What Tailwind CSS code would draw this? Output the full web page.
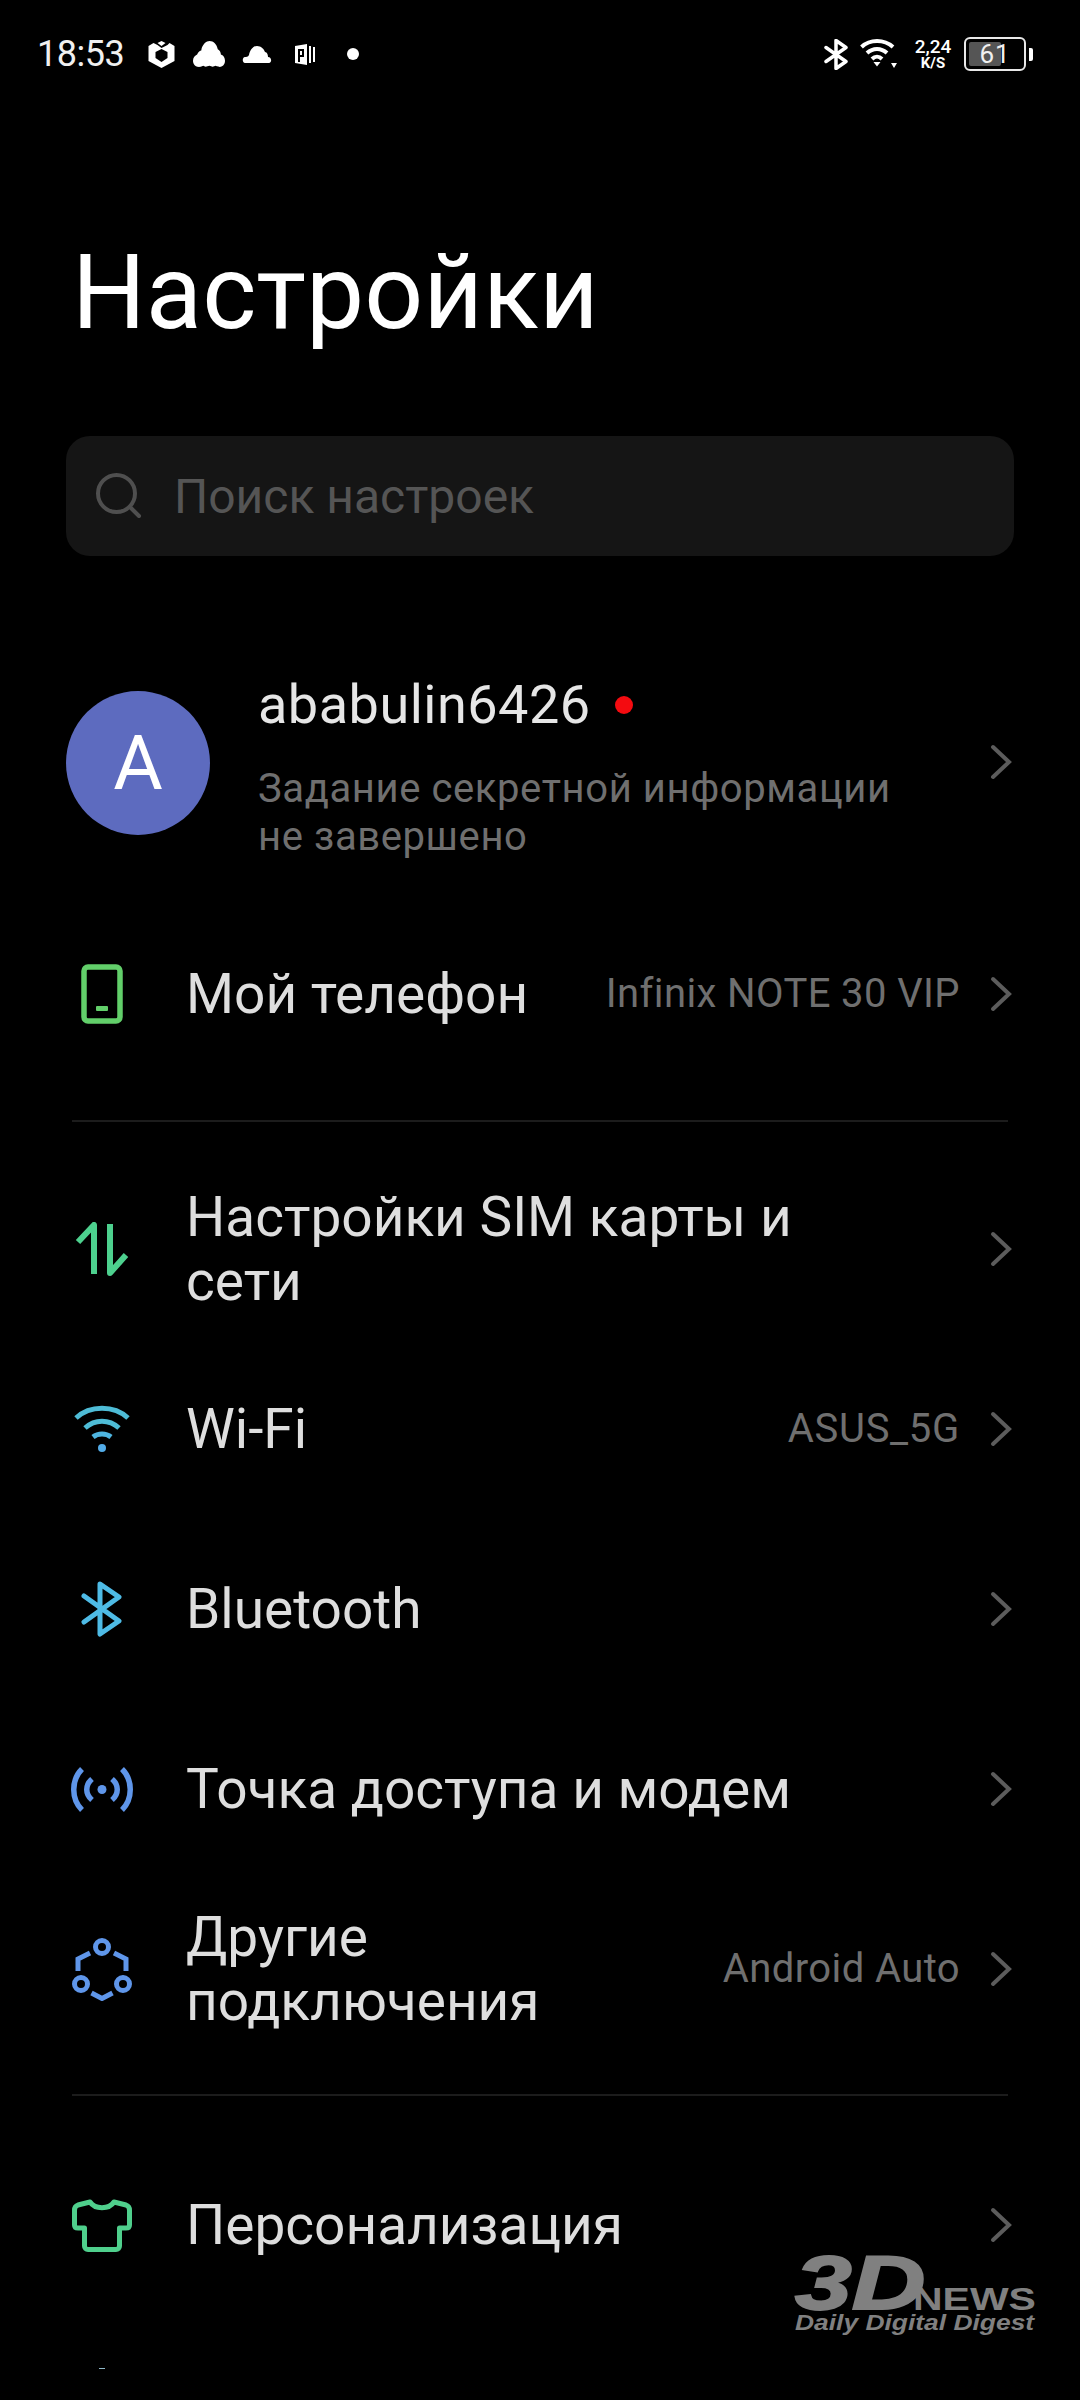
<!DOCTYPE html>
<html><head><meta charset="utf-8"><script src="https://cdn.jsdelivr.net/npm/@tailwindcss/browser@4"></script></head>
<body class="bg-black">
<div class="relative w-[1080px] h-[2400px] overflow-hidden bg-black font-['Roboto',sans-serif]">
  <!-- status bar -->
  <div class="h-[108px] flex items-center pl-[37px] pr-[47px] text-white">
    <span class="text-[36px] leading-none w-[111px] text-[#f0f0f0] tracking-[-0.5px]">18:53</span>
    <div class="flex items-center">
      <svg width="27" height="27" viewBox="0 0 26 27"><path d="M13 0 L17 2 L13 5 L9 2Z M5 2 L9 4 L13 7 L19 4 L21 2 L26 5 V20 L13 27 L0 20 V5Z M13 8 L7 11 V17 L13 21 L19 17 V11Z" fill="#fff" fill-rule="evenodd"/></svg>
      <svg class="ml-[18px]" width="32" height="26" viewBox="0 0 31 25"><path d="M6 25 C1 25 0 21 0 19 C0 16 2 14 4 13 C5 10 7 9 8 9 C9 3 13 0 16 0 C20 0 23 3 24 8 C26 9 27 11 27 13 C30 14 31 17 31 19 C31 23 28 25 26 25 C24 25 22 24 22 24 C20 25 18 25 16 24 C13 25 11 25 10 24 C8 25 7 25 6 25Z" fill="#fff"/></svg>
      <svg class="ml-[17px]" width="30" height="17" viewBox="0 0 30 17"><path d="M3 17 C0 17 0 11 3 11 C4 11 6 11 7 9 C8 4 11 0 15 0 C19 0 22 3 23 6 C25 6 26 9 26 11 C30 11 30 17 27 17Z" fill="#fff"/></svg>
      <svg class="ml-[23px]" width="20" height="21" viewBox="0 0 20 21"><path d="M0 2 L12 0 V21 L0 19Z" fill="#fff"/><path d="M3 5 H9 V13 H5 V18 H3Z M5 7 V11 H7 V7Z" fill="#000" fill-rule="evenodd"/><rect x="14" y="2" width="2" height="17" fill="#fff"/><rect x="18" y="3" width="2" height="15" fill="#fff"/></svg>
      <div class="ml-[32px] w-[12px] h-[12px] rounded-full bg-white"></div>
    </div>
    <div class="ml-auto flex items-center">
      <svg width="24" height="31" viewBox="0 0 24 31"><path d="M2 8.500 L22 22.500 L12 29.500 V1.500 L22 8.500 L2 22.500" fill="none" stroke="#fff" stroke-width="3.500" stroke-linejoin="round" stroke-linecap="round"/></svg>
      <svg class="ml-[12px]" width="37" height="30" viewBox="0 0 37 30"><path d="M1.500 8 C10 0 24 0 33 8" fill="none" stroke="#fff" stroke-width="4"/><path d="M7 14 C13 8.500 21 8.500 27 14" fill="none" stroke="#fff" stroke-width="4"/><path d="M12 20 C15 17 19 17 22 20" fill="none" stroke="#fff" stroke-width="4"/><path d="M13.500 23 H20.500 L17 27.500Z" fill="#fff"/><path d="M31 24 H37 L34 29Z" fill="#fff"/></svg>
      <div class="ml-[16px] w-[40px] flex flex-col items-center text-white">
        <span class="text-[19px] leading-[19px] font-medium">2,24</span>
        <span class="text-[15px] leading-[15px] font-bold">K/S</span>
      </div>
      <div class="relative ml-[11px] w-[62px] h-[34px] rounded-[6px] border-[2px] border-[#e8e8e8] p-[3px]">
        <div class="w-[32px] h-full bg-[#555] rounded-[2px]"></div>
        <span class="absolute inset-0 flex items-center justify-center text-[26px] leading-none text-[#f0f0f0] tracking-[1px]">61</span>
      </div>
      <div class="ml-[3px] w-[4px] h-[13px] bg-white rounded-r-[2px]"></div>
    </div>
  </div>

  <!-- title -->
  <h1 class="mt-[149px] pl-[72px] text-[103.5px] leading-[72px] h-[72px] font-normal text-white">Настройки</h1>

  <!-- search -->
  <div class="mt-[107px] mx-[66px] h-[120px] w-[948px] rounded-[24px] bg-[#151515] flex items-center pl-[30px]">
    <svg width="46" height="46" viewBox="0 0 46 46"><circle cx="20.500" cy="20.500" r="18.500" fill="none" stroke="#4f4f4f" stroke-width="4"/><path d="M34 34 L43 43" stroke="#4f4f4f" stroke-width="4" stroke-linecap="round"/></svg>
    <span class="ml-[32px] mt-[2px] text-[48px] leading-none text-[#555555]">Поиск настроек</span>
  </div>

  <!-- profile -->
  <div class="mt-[117px] h-[172px] pl-[66px] pr-[68px] flex items-center">
    <div class="w-[144px] h-[144px] rounded-full bg-[#5d6bbf] flex items-center justify-center text-white text-[76px] leading-none shrink-0 mt-[8px]">A</div>
    <div class="ml-[48px] mt-[16px] flex-1 min-w-0">
      <div class="flex items-center">
        <span class="text-[54px] leading-[62px] text-[#e6e6e6] tracking-[0.5px]">ababulin6426</span>
        <span class="ml-[24px] w-[18px] h-[18px] rounded-full bg-[#f40b10]"></span>
      </div>
      <div class="mt-[29px] text-[40px] leading-[48px] text-[#6f6f6f] tracking-[0.6px]">Задание секретной информации<br>не завершено</div>
    </div>
    <svg class="mt-[6px]" width="22" height="36" viewBox="0 0 22 36"><path d="M3 3 L19 18 L3 33" fill="none" stroke="#5c5c5c" stroke-width="4" stroke-linecap="round"/></svg>
  </div>

  <!-- my phone -->
  <div class="mt-[59px] h-[180px] flex items-center pl-[72px] pr-[68px]">
    <div class="w-[60px] flex justify-center"><svg width="42" height="60" viewBox="0 0 42 60"><rect x="3" y="3" width="36" height="54" rx="4" fill="none" stroke="#62cf6a" stroke-width="5.500"/><rect x="15" y="42" width="12" height="5" rx="1" fill="#62cf6a"/></svg></div>
    <span class="ml-[54px] text-[55px] leading-[64px] text-[#dedede] flex-1">Мой телефон</span>
    <span class="text-[40px] text-[#6f6f6f] mr-[30px] tracking-[0.4px]">Infinix NOTE 30 VIP</span>
    <svg width="22" height="36" viewBox="0 0 22 36"><path d="M3 3 L19 18 L3 33" fill="none" stroke="#5c5c5c" stroke-width="4" stroke-linecap="round"/></svg>
  </div>
  <div class="mx-[72px] mt-[36px] h-[2px] bg-[#1c1c1c]"></div>

  <!-- SIM -->
  <div class="mt-[37px] h-[180px] flex items-center pl-[72px] pr-[68px]">
    <div class="w-[60px] flex justify-center"><svg width="54" height="54" viewBox="0 0 54 54"><path d="M3 20 L19 3 V52 M35 2 V51 L51 33" fill="none" stroke="#4dd08e" stroke-width="6" stroke-linejoin="round"/></svg></div>
    <span class="ml-[54px] text-[55px] leading-[64px] text-[#dedede] flex-1">Настройки SIM карты и<br>сети</span>
    <svg width="22" height="36" viewBox="0 0 22 36"><path d="M3 3 L19 18 L3 33" fill="none" stroke="#5c5c5c" stroke-width="4" stroke-linecap="round"/></svg>
  </div>
  <!-- WiFi -->
  <div class="h-[180px] flex items-center pl-[72px] pr-[68px]">
    <div class="w-[60px] flex justify-center"><svg width="58" height="50" viewBox="0 0 58 50"><path d="M3 14 C17 1 41 1 55 14" fill="none" stroke="#4ebcd6" stroke-width="5"/><path d="M12 24 C22 15 36 15 46 24" fill="none" stroke="#4ebcd6" stroke-width="5"/><path d="M20 33 C25 29 33 29 38 33" fill="none" stroke="#4eb5e0" stroke-width="5"/><circle cx="29" cy="44" r="4" fill="#52ace8"/></svg></div>
    <span class="ml-[54px] text-[55px] leading-[64px] text-[#dedede] flex-1">Wi-Fi</span>
    <span class="text-[40px] text-[#6f6f6f] mr-[30px] tracking-[0.7px]">ASUS_5G</span>
    <svg width="22" height="36" viewBox="0 0 22 36"><path d="M3 3 L19 18 L3 33" fill="none" stroke="#5c5c5c" stroke-width="4" stroke-linecap="round"/></svg>
  </div>
  <!-- BT -->
  <div class="h-[180px] flex items-center pl-[72px] pr-[68px]">
    <div class="w-[60px] flex justify-center"><svg width="44" height="56" viewBox="0 0 44 56"><path d="M4 15 L39 40 L20 53 V3 L39 16 L4 41" fill="none" stroke="#4ebbe6" stroke-width="5" stroke-linejoin="round" stroke-linecap="round"/></svg></div>
    <span class="ml-[54px] text-[55px] leading-[64px] text-[#dedede] flex-1">Bluetooth</span>
    <svg width="22" height="36" viewBox="0 0 22 36"><path d="M3 3 L19 18 L3 33" fill="none" stroke="#5c5c5c" stroke-width="4" stroke-linecap="round"/></svg>
  </div>
  <!-- Hotspot -->
  <div class="h-[180px] flex items-center pl-[72px] pr-[68px]">
    <div class="w-[60px] flex justify-center"><svg width="64" height="47" viewBox="0 0 64 47" class="shrink-0"><g fill="none" stroke="#5f96ea" stroke-width="5.500"><path d="M12 3 C1 14 1 33 12 44"/><path d="M52 3 C63 14 63 33 52 44"/><path d="M22 13 C15 19 15 28 22 34"/><path d="M42 13 C49 19 49 28 42 34"/></g><circle cx="32" cy="23.500" r="4.500" fill="#5f96ea"/></svg></div>
    <span class="ml-[54px] text-[55px] leading-[64px] text-[#dedede] flex-1">Точка доступа и модем</span>
    <svg width="22" height="36" viewBox="0 0 22 36"><path d="M3 3 L19 18 L3 33" fill="none" stroke="#5c5c5c" stroke-width="4" stroke-linecap="round"/></svg>
  </div>
  <!-- Other -->
  <div class="h-[180px] flex items-center pl-[72px] pr-[68px]">
    <div class="w-[60px] flex justify-center"><svg width="60" height="63" viewBox="0 0 60 63" class="shrink-0"><g fill="none" stroke="#5f96ea" stroke-width="5"><circle cx="30" cy="9" r="6.500"/><circle cx="9" cy="46" r="6.500"/><circle cx="51" cy="46" r="6.500"/><path d="M18 15 L6 21 V33"/><path d="M42 15 L54 21 V33"/><path d="M19.500 55 L30 60.500 L40.500 55"/></g></svg></div>
    <span class="ml-[54px] text-[55px] leading-[64px] text-[#dedede] flex-1">Другие<br>подключения</span>
    <span class="text-[40px] text-[#6f6f6f] mr-[30px] tracking-[0.4px]">Android Auto</span>
    <svg width="22" height="36" viewBox="0 0 22 36"><path d="M3 3 L19 18 L3 33" fill="none" stroke="#5c5c5c" stroke-width="4" stroke-linecap="round"/></svg>
  </div>
  <div class="mx-[72px] mt-[35px] h-[2px] bg-[#1c1c1c]"></div>
  <!-- Pers -->
  <div class="mt-[39px] h-[180px] flex items-center pl-[72px] pr-[68px]">
    <div class="w-[60px] flex justify-center"><svg width="60" height="53" viewBox="0 0 60 53" class="shrink-0"><path d="M18 3 C23 10.500 37 10.500 42 3 L54 6 C56.500 7 57.500 8 57.500 11 V26 C57.500 28 56 29 54 29 H47.500 V47 C47.500 49 46 50.500 44 50.500 H16 C14 50.500 12.500 49 12.500 47 V29 H6 C4 29 2.500 28 2.500 26 V11 C2.500 8 3.500 7 6 6Z" fill="none" stroke="#4fcf8c" stroke-width="5" stroke-linejoin="round"/></svg></div>
    <span class="ml-[54px] text-[55px] leading-[64px] text-[#dedede] flex-1">Персонализация</span>
    <svg width="22" height="36" viewBox="0 0 22 36"><path d="M3 3 L19 18 L3 33" fill="none" stroke="#5c5c5c" stroke-width="4" stroke-linecap="round"/></svg>
  </div>

  <!-- sliver of the next row's icon at the bottom edge -->
  <div class="absolute left-[99px] top-[2368px] w-[6px] h-[1px] bg-[#8fb8c8]"></div>

  <!-- watermark -->
  <div class="absolute left-[795px] top-[2255px] w-[245px] h-[80px] text-[#808080] font-['Liberation_Sans',sans-serif]">
    <span class="absolute left-0 top-0 text-[76px] leading-[55px] font-bold italic scale-x-[1.34] origin-left [-webkit-text-stroke:2px_#808080]">3D</span>
    <span class="absolute left-[118px] top-[33px] text-[32px] leading-[23px] font-bold scale-x-[1.28] origin-left">NEWS</span>
    <span class="absolute left-0 top-[58px] text-[22px] leading-[20px] font-bold italic scale-x-[1.2] origin-left whitespace-nowrap">Daily Digital Digest</span>
  </div>
</div>
</body></html>
